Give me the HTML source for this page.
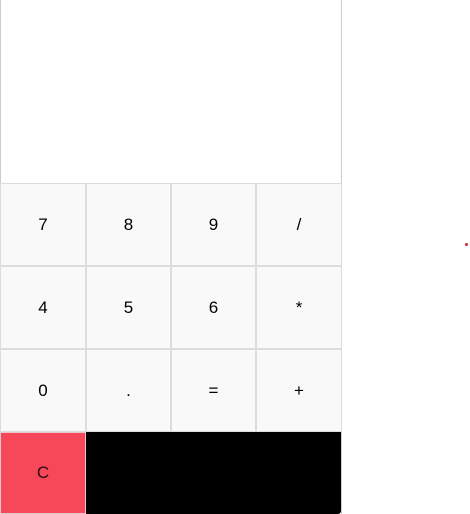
<!DOCTYPE html>
<html><head><style>
body{margin:0;width:470px;height:514px;background:#fff;position:relative;overflow:hidden;font-family:"Liberation Sans",sans-serif}
.b{position:absolute;background:#f9f9f9;box-sizing:border-box;border:1px solid #dcdcdc;display:flex;align-items:center;justify-content:center;font-size:17px;color:#000}
</style></head><body>
<div style="position:absolute;left:0;top:0;width:1px;height:514px;background:#ccc"></div>
<div style="position:absolute;left:341px;top:0;width:1px;height:514px;background:#ccc"></div>
<div class="b" style="left:0;top:183px;width:86px;height:83px">7</div>
<div class="b" style="left:86px;top:183px;width:85px;height:83px">8</div>
<div class="b" style="left:171px;top:183px;width:85px;height:83px">9</div>
<div class="b" style="left:256px;top:183px;width:86px;height:83px">/</div>
<div class="b" style="left:0;top:266px;width:86px;height:83px">4</div>
<div class="b" style="left:86px;top:266px;width:85px;height:83px">5</div>
<div class="b" style="left:171px;top:266px;width:85px;height:83px">6</div>
<div class="b" style="left:256px;top:266px;width:86px;height:83px">*</div>
<div class="b" style="left:0;top:349px;width:86px;height:83px">0</div>
<div class="b" style="left:86px;top:349px;width:85px;height:83px">.</div>
<div class="b" style="left:171px;top:349px;width:85px;height:83px">=</div>
<div class="b" style="left:256px;top:349px;width:86px;height:83px">+</div>
<div class="b" style="left:0;top:432px;width:86px;height:82px;background:#f7485a;border-color:#e8c8cc;color:#2a0a0e">C</div>
<div style="position:absolute;left:86px;top:432px;width:255px;height:82px;background:#000;border-bottom-right-radius:3px"></div>
<div style="position:absolute;left:465px;top:243px;width:3px;height:3px;border-radius:50%;background:#d2283a"></div>
</body></html>
